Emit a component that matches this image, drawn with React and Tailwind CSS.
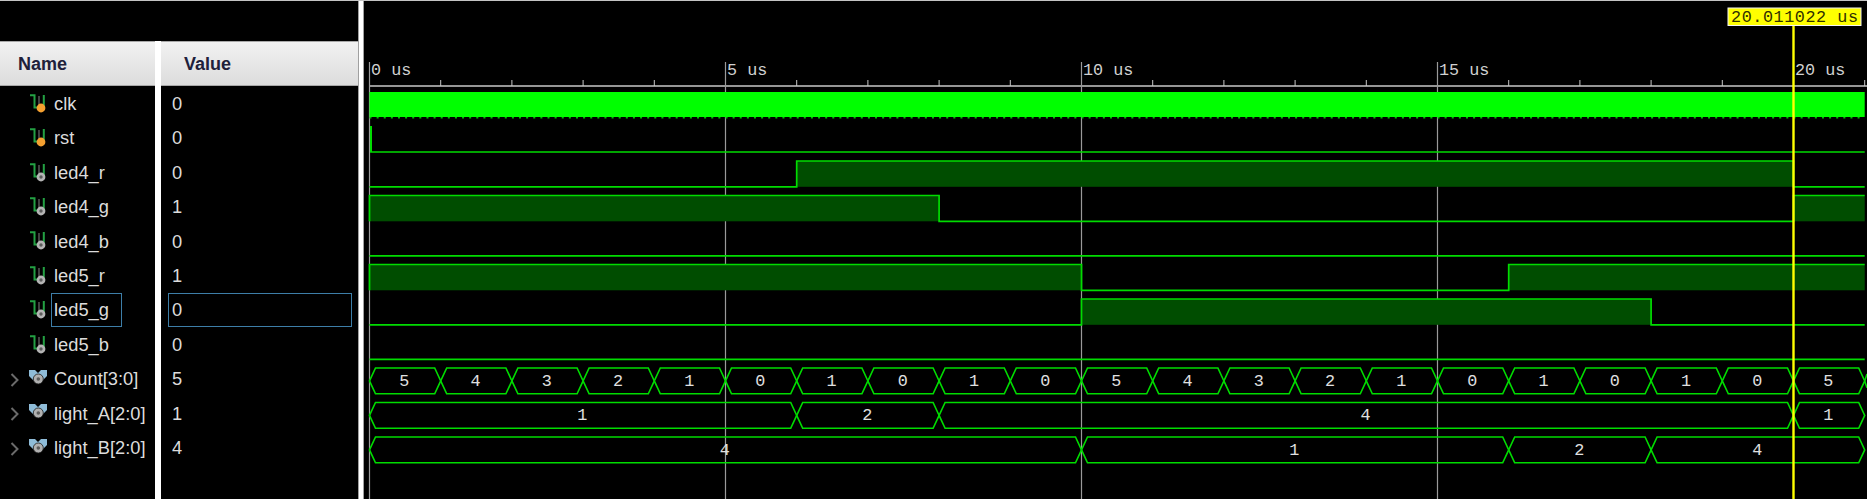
import React from 'react';

// time axis: 71.2px per microsecond, starting at x = 369.5
const tx = (us) => 369.5 + us * 71.2;

const GREEN = '#00dc00';
const MONO = '"Liberation Mono", monospace';

const signals = [
  { name: 'clk', value: '0', kind: 'clock' },
  { name: 'rst', value: '0', kind: 'clock' },
  { name: 'led4_r', value: '0', kind: 'wire' },
  { name: 'led4_g', value: '1', kind: 'wire' },
  { name: 'led4_b', value: '0', kind: 'wire' },
  { name: 'led5_r', value: '1', kind: 'wire' },
  { name: 'led5_g', value: '0', kind: 'wire', selected: true },
  { name: 'led5_b', value: '0', kind: 'wire' },
  { name: 'Count[3:0]', value: '5', kind: 'bus' },
  { name: 'light_A[2:0]', value: '1', kind: 'bus' },
  { name: 'light_B[2:0]', value: '4', kind: 'bus' },
];

// top y of each wave row
const rowTop = (i) => 92 + i * 34.5;
const WAVE_H = 25.8;

// [from, to] spans in us where the signal is high
const bits = [
  { row: 2, high: [[6, 20]] },
  { row: 3, high: [[0, 8], [20, 21]] },
  { row: 4, high: [] },
  { row: 5, high: [[0, 10], [16, 21]] },
  { row: 6, high: [[10, 18]] },
  { row: 7, high: [] },
];

const countSeq = [5, 4, 3, 2, 1, 0, 1, 0, 1, 0, 5, 4, 3, 2, 1, 0, 1, 0, 1, 0, 5];

const buses = [
  { row: 8, segs: countSeq.map((v, i) => [i, i + 1, String(v)]) },
  { row: 9, segs: [[0, 6, '1'], [6, 8, '2'], [8, 20, '4'], [20, 21, '1']] },
  { row: 10, segs: [[0, 10, '4'], [10, 16, '1'], [16, 18, '2'], [18, 21, '4']] },
];

function WireIcon({ dot }) {
  return (
    <svg width="18" height="20" viewBox="0 0 18 20" className="shrink-0">
      <path d="M0 1.2H4.5V13.5H13.8V1" fill="none" stroke="#23a043" strokeWidth="2" />
      <path d="M9 2V11" stroke="#6e6e6e" strokeWidth="1.2" />
      <circle cx="11" cy="14" r="4.4" fill={dot ? '#f5a030' : '#b4b4b4'} />
      {!dot && <circle cx="11" cy="14" r="1.7" fill="#5c5c5c" />}
    </svg>
  );
}

function BusIcon() {
  return (
    <svg width="18" height="20" viewBox="0 0 18 20" className="shrink-0">
      <path d="M0 1H6L9 4L12 1H18V7L13 12H5L0 7Z" fill="#8fbcd8" />
      <circle cx="9.3" cy="10" r="5" fill="#b0b0b0" stroke="#1c1c1c" strokeWidth="0.8" />
      <circle cx="9.3" cy="10" r="1.8" fill="#5c5c5c" />
    </svg>
  );
}

function NameRow({ s }) {
  return (
    <div className="h-[34.4px] flex items-center relative">
      {s.kind === 'bus' && (
        <svg width="9" height="14" viewBox="0 0 9 14" className="absolute left-[10px] top-[11px]">
          <path d="M1.5 1L7.5 7L1.5 13" fill="none" stroke="#6a6a6a" strokeWidth="2" />
        </svg>
      )}
      <div className={s.kind === 'bus' ? 'ml-[29px] w-[25px]' : 'ml-[30px] w-[24px]'}>
        {s.kind === 'bus' ? <BusIcon /> : <WireIcon dot={s.kind === 'clock'} />}
      </div>
      <span
        className={
          s.selected
            ? 'h-[34px] flex items-center -ml-[3px] pl-[2px] w-[71px] border border-[#3d7ea8] whitespace-nowrap'
            : 'whitespace-nowrap'
        }
      >
        {s.name}
      </span>
    </div>
  );
}

function ValueRow({ s }) {
  return (
    <div className="h-[34.4px] flex items-center">
      <div
        className={
          s.selected
            ? 'ml-[7px] w-[184px] h-[34px] flex items-center pl-[3px] border border-[#3d7ea8]'
            : 'ml-[11px]'
        }
      >
        {s.value}
      </div>
    </div>
  );
}

function HeaderCell({ label, pad }) {
  return (
    <div
      className={`h-[45px] mb-[0.6px] pt-[2px] flex items-center border-y border-[#a8a8a8] bg-gradient-to-b from-[#f2f2f2] to-[#dcdcdc] text-[18px] font-bold text-[#20203a] ${pad}`}
    >
      {label}
    </div>
  );
}

function WaveChart() {
  const ticks = [];
  for (let i = 1; i <= 21; i++) if (i % 5) ticks.push(i);

  return (
    <svg width="1503" height="498" viewBox="364 1 1503 498" className="block shrink-0">
      {/* ruler */}
      <line x1="369" y1="86" x2="1867" y2="86" stroke="#c8c8c8" strokeWidth="1.5" />
      {ticks.map((t) => (
        <line key={t} x1={tx(t)} y1="80" x2={tx(t)} y2="86" stroke="#c8c8c8" />
      ))}
      {[0, 5, 10, 15].map((t) => (
        <line key={t} x1={tx(t)} y1="62" x2={tx(t)} y2="499" stroke="#9a9a9a" strokeWidth="1.2" />
      ))}
      {[0, 5, 10, 15, 20].map((t) => (
        <text key={t} x={tx(t) + 1.5} y="75" fill="#d0d0d0" fontFamily={MONO} fontSize="16.8">
          {t} us
        </text>
      ))}

      {/* clk */}
      <rect x={tx(0)} y="92" width={tx(21) - tx(0)} height="25" fill="#00ff00" />
      <line
        x1={tx(0)}
        y1="117.7"
        x2={tx(21)}
        y2="117.7"
        stroke="#00c000"
        strokeWidth="1.4"
        strokeDasharray="2 5.12"
      />

      {/* rst */}
      <rect x="370" y="126" width="2" height="26" fill={GREEN} />
      <line x1="370" y1="152" x2={tx(21)} y2="152" stroke={GREEN} strokeWidth="1.7" />

      {/* single bit signals */}
      {bits.map(({ row, high }) => {
        const top = rowTop(row);
        const low = top + WAVE_H;
        let d = `M${tx(0)} ${high[0] && high[0][0] === 0 ? top : low}`;
        high.forEach(([a, b]) => {
          d += ` L${tx(a)} ${low} L${tx(a)} ${top} L${tx(b)} ${top}`;
          if (b < 21) d += ` L${tx(b)} ${low}`;
        });
        if (!high.length || high[high.length - 1][1] < 21) d += ` L${tx(21)} ${low}`;
        return (
          <g key={row}>
            {high.map(([a, b]) => (
              <rect key={a} x={tx(a)} y={top} width={tx(b) - tx(a)} height={WAVE_H} fill="#004d00" />
            ))}
            <path d={d} fill="none" stroke={GREEN} strokeWidth="1.7" />
          </g>
        );
      })}

      {/* buses */}
      {buses.map(({ row, segs }) => {
        const top = rowTop(row);
        const bot = top + WAVE_H;
        const mid = top + WAVE_H / 2;
        return (
          <g key={row}>
            {segs.map(([a, b, label]) => {
              const x1 = tx(a);
              const x2 = tx(b);
              return (
                <g key={a}>
                  <path
                    d={`M${x1} ${mid} L${x1 + 6} ${top} L${x2 - 6} ${top} L${x2} ${mid} L${x2 - 6} ${bot} L${x1 + 6} ${bot} Z`}
                    fill="none"
                    stroke={GREEN}
                    strokeWidth="1.6"
                  />
                  <text
                    x={(x1 + x2) / 2 - 0.7}
                    y={mid + 5}
                    textAnchor="middle"
                    fill="#e0e0e0"
                    fontFamily={MONO}
                    fontSize="16.8"
                  >
                    {label}
                  </text>
                </g>
              );
            })}
          </g>
        );
      })}
      {/* next Count value starts at the right edge */}
      <path
        d={`M${tx(21)} ${rowTop(8) + WAVE_H / 2} L1867 ${rowTop(8) + 6} M${tx(21)} ${rowTop(8) + WAVE_H / 2} L1867 ${rowTop(8) + WAVE_H - 6}`}
        stroke={GREEN}
        strokeWidth="1.6"
      />

      {/* cursor */}
      <line x1="1793.5" y1="25" x2="1793.5" y2="499" stroke="#ffff00" strokeWidth="2.4" />
      <rect x="1728" y="8" width="133" height="17.5" fill="#ffff00" stroke="#f4f4f4" />
      <text x="1731" y="22" fill="#303000" fontFamily={MONO} fontSize="16.8" textLength="127">
        20.011022 us
      </text>
    </svg>
  );
}

export default function App() {
  return (
    <div
      className="w-[1867px] h-[499px] overflow-hidden bg-black border-t border-[#c4c4c4] flex text-[18.3px] text-[#dcdcdc]"
      style={{ fontFamily: '"Liberation Sans", Arial, sans-serif' }}
    >
      <div className="w-[358px] shrink-0 flex flex-col">
        <div className="h-[40px] shrink-0" />
        <div className="flex-1 flex">
          <div className="w-[155px]">
            <HeaderCell label="Name" pad="pl-[18px]" />
            {signals.map((s) => (
              <NameRow key={s.name} s={s} />
            ))}
          </div>
          <div className="w-[6px] bg-white" />
          <div className="flex-1">
            <HeaderCell label="Value" pad="pl-[23px]" />
            {signals.map((s) => (
              <ValueRow key={s.name} s={s} />
            ))}
          </div>
        </div>
      </div>
      <div className="w-[6px] shrink-0 bg-white border-l border-[#a0a0a0] border-r" />
      <WaveChart />
    </div>
  );
}
